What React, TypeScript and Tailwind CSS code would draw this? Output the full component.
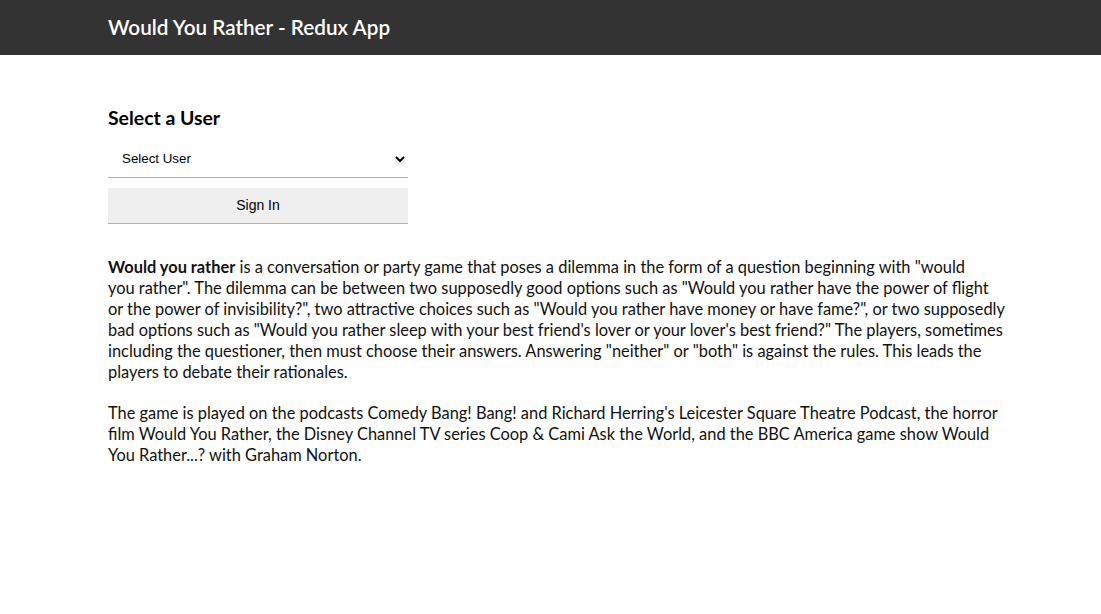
import React from "react";

export default function App() {
  return (
    <div className="min-h-[614px] bg-white text-black font-['Lato','Noto_Sans',sans-serif]">
      <header className="h-[55px] bg-[#333333] flex items-center px-[108px]">
        <h1 className="text-white text-[20.7px] font-semibold">Would You Rather - Redux App</h1>
      </header>
      <main className="px-[108px] pt-[51px]">
        <h3 className="text-[19.4px] font-bold leading-[24px]">Select a User</h3>
        <div className="w-[300px] mt-[10px] flex flex-col gap-[10px]">
          <select
            defaultValue=""
            className="h-[38px] w-full border-0 border-b border-[#b0b0b0] bg-white pl-[10px] pr-[4px] font-['Liberation_Sans',Arial,sans-serif] text-[13.33px] text-black outline-none"
          >
            <option value="">Select User</option>
          </select>
          <button className="h-[36px] w-full bg-[#efefef] border-0 border-b border-[#b0b0b0] font-['Liberation_Sans',Arial,sans-serif] text-[14px] text-black">
            Sign In
          </button>
        </div>
        <div className="mt-[32px] text-[16.4px] leading-[21px] text-[#111]">
          <p className="whitespace-nowrap">
            <b>Would you rather</b> is a conversation or party game that poses a dilemma in the form of a question beginning with "would<br />
            you rather". The dilemma can be between two supposedly good options such as "Would you rather have the power of flight<br />
            or the power of invisibility?", two attractive choices such as "Would you rather have money or have fame?", or two supposedly<br />
            bad options such as "Would you rather sleep with your best friend's lover or your lover's best friend?" The players, sometimes<br />
            including the questioner, then must choose their answers. Answering "neither" or "both" is against the rules. This leads the<br />
            players to debate their rationales.
          </p>
          <p className="whitespace-nowrap mt-[20px]">
            The game is played on the podcasts Comedy Bang! Bang! and Richard Herring's Leicester Square Theatre Podcast, the horror<br />
            film Would You Rather, the Disney Channel TV series Coop &amp; Cami Ask the World, and the BBC America game show Would<br />
            You Rather...? with Graham Norton.
          </p>
        </div>
      </main>
    </div>
  );
}
